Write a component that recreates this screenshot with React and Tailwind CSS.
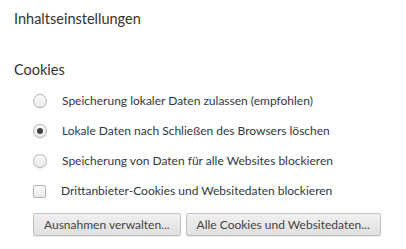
import React from 'react';

const Radio = ({ checked }) => (
  <span className="relative inline-flex size-[14px] shrink-0 items-center justify-center rounded-full border border-[#b4b4b4] bg-gradient-to-b from-[#fafafa] to-[#ececec] shadow-[0_1px_1px_rgba(0,0,0,0.08)]">
    {checked && <span className="size-[6px] rounded-full bg-[#444]"></span>}
  </span>
);

const Checkbox = () => (
  <span className="inline-block size-[13px] shrink-0 rounded-[2px] border border-[#b4b4b4] bg-gradient-to-b from-[#fafafa] to-[#ececec]"></span>
);

const Button = ({ children }) => (
  <button className="h-[23px] whitespace-nowrap rounded-[2px] border border-[#c0c0c0] bg-gradient-to-b from-[#f0f0f0] to-[#e0e0e0] px-[10px] text-[12px] leading-none text-[#444] shadow-[0_1px_0_rgba(0,0,0,0.08)]">
    {children}
  </button>
);

const options = [
  { label: 'Speicherung lokaler Daten zulassen (empfohlen)', checked: false },
  { label: 'Lokale Daten nach Schließen des Browsers löschen', checked: true },
  { label: 'Speicherung von Daten für alle Websites blockieren', checked: false },
];

export default function App() {
  return (
    <div className="h-[249px] w-[406px] bg-white font-['Lato','Noto_Sans',sans-serif] text-[#303942]">
      <div className="px-[14px] pt-[10px]">
        <h1 className="text-[14.5px] leading-[18px] text-[#333]">Inhaltseinstellungen</h1>
        <h2 className="mt-[33px] text-[14.5px] leading-[18px] text-[#333]">Cookies</h2>
        <div className="mt-[7px] flex flex-col pl-[19px] text-[12px]">
          {options.map((o) => (
            <label key={o.label} className="flex h-[30px] items-center gap-[15px]">
              <Radio checked={o.checked} />
              <span>{o.label}</span>
            </label>
          ))}
          <label className="flex h-[30px] items-center gap-[15px]">
            <Checkbox />
            <span>Drittanbieter-Cookies und Websitedaten blockieren</span>
          </label>
          <div className="mt-[7px] flex gap-[5px]">
            <Button>Ausnahmen verwalten...</Button>
            <Button>Alle Cookies und Websitedaten...</Button>
          </div>
        </div>
      </div>
    </div>
  );
}
